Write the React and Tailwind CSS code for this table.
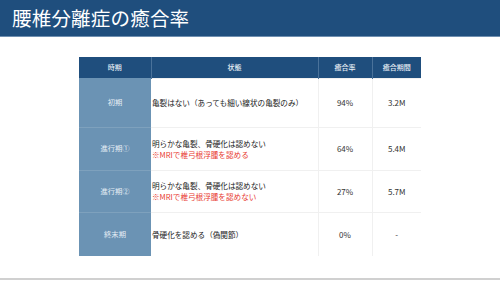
import React from 'react';

const rows = [
  { stage: '初期', lines: ['亀裂はない（あっても細い線状の亀裂のみ）'], rate: '94%', period: '3.2M', h: 'h-[49px]' },
  { stage: '進行期①', lines: ['明らかな亀裂、骨硬化は認めない'], note: '※MRIで椎弓根浮腫を認める', rate: '64%', period: '5.4M', h: 'h-[43px]' },
  { stage: '進行期②', lines: ['明らかな亀裂、骨硬化は認めない'], note: '※MRIで椎弓根浮腫を認めない', rate: '27%', period: '5.7M', h: 'h-[42px]' },
  { stage: '終末期', lines: ['骨硬化を認める（偽関節）'], rate: '0%', period: '-', h: 'h-[44px]' },
];

const App = () => {
  return (
    <div
      className="w-[500px] h-[281px] bg-white flex flex-col overflow-hidden"
      style={{ fontFamily: '"Noto Sans CJK JP", "Noto Sans", sans-serif' }}
    >
      {/* Title bar */}
      <div className="h-[37px] bg-[#1f4e7d] border-b border-[#6f8fb0] flex items-center pl-[12px] shrink-0">
        <h1 className="text-[19.5px] leading-none text-white tracking-[0.2px]">腰椎分離症の癒合率</h1>
      </div>

      <div className="flex-1 pt-[20px] pl-[79px]">
        <table className="border-collapse table-fixed w-[342px] text-[7.6px] leading-[11px] text-[#1a1a1a]">
          <colgroup>
            <col className="w-[72px]" />
            <col className="w-[167px]" />
            <col className="w-[54px]" />
            <col className="w-[49px]" />
          </colgroup>
          <thead>
            <tr className="h-[21px] bg-[#1f4e7d] text-[#e8eef5] text-[7px]">
              <th className="font-medium border-r border-[#4a729a]">時期</th>
              <th className="font-medium border-r border-[#4a729a]">状態</th>
              <th className="font-medium border-r border-[#4a729a]">癒合率</th>
              <th className="font-medium">癒合期間</th>
            </tr>
          </thead>
          <tbody>
            {rows.map((r, i) => (
              <tr key={r.stage} className={r.h}>
                <td className={`bg-[#6b93b4] text-[#e4edf4] text-[7.3px] text-center ${i > 0 ? 'border-t border-[#7ea1bd]' : ''}`}>
                  {r.stage}
                </td>
                <td className="pl-[1px] border-t border-[#f0f0f0] align-middle">
                  {r.lines.map(l => <div key={l}>{l}</div>)}
                  {r.note && <div className="text-[#e8392f]">{r.note}</div>}
                </td>
                <td className="text-center text-[8px] border-t border-l border-[#f0f0f0] text-[#333]">{r.rate}</td>
                <td className="text-center text-[8px] border-t border-l border-[#f0f0f0] text-[#333]">{r.period}</td>
              </tr>
            ))}
          </tbody>
        </table>
      </div>

      <div className="h-[2px] bg-[#d0d0d0] shrink-0 mb-[1px]" />
    </div>
  );
};

export default App;
